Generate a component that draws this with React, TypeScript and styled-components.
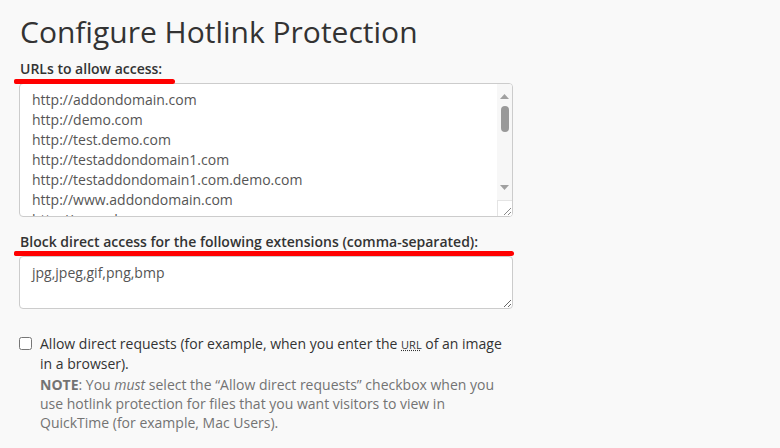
import styled, { createGlobalStyle } from 'styled-components';

const urls = [
  'http://addondomain.com',
  'http://demo.com',
  'http://test.demo.com',
  'http://testaddondomain1.com',
  'http://testaddondomain1.com.demo.com',
  'http://www.addondomain.com',
  'http://www.demo.com',
  'http://www.test.demo.com',
  'http://www.testaddondomain1.com',
];

function App() {
  return (
    <Page>
      <GlobalStyle />
      <Title>Configure Hotlink Protection</Title>

      <Field>
        <Label>
          URLs to allow access:
          <Mark $width={161} $top={20} />
        </Label>
        <ScrollBox>
          <ListArea defaultValue={urls.join('\n')} spellCheck={false} />
          <ScrollColumn>
            <ArrowButton>
              <svg width="9" height="5" viewBox="0 0 9 5">
                <path d="M0 5 L4.5 0 L9 5 Z" fill="#a0a0a0" />
              </svg>
            </ArrowButton>
            <Track>
              <Thumb />
            </Track>
            <ArrowButton $down>
              <svg width="9" height="5" viewBox="0 0 9 5">
                <path d="M0 0 L9 0 L4.5 5 Z" fill="#a0a0a0" />
              </svg>
            </ArrowButton>
            <Corner>
              <svg width="8" height="8" viewBox="0 0 8 8">
                <path d="M1 8 L8 1 M5 8 L8 5" stroke="#8a8a8a" strokeWidth="1" />
              </svg>
            </Corner>
          </ScrollColumn>
        </ScrollBox>
      </Field>

      <Field>
        <Label>
          Block direct access for the following extensions (comma-separated):
          <Mark $width={500} $top={19} />
        </Label>
        <TextArea defaultValue="jpg,jpeg,gif,png,bmp" spellCheck={false} />
      </Field>

      <CheckRow>
        <CheckBox type="checkbox" />
        <div>
          <CheckText>
            Allow direct requests (for example, when you enter the <Abbr title="Uniform Resource Locator">URL</Abbr> of an
            image in a browser).
          </CheckText>
          <Note>
            <strong>NOTE</strong>: You <em>must</em> select the “Allow direct requests” checkbox when you use hotlink
            protection for files that you want visitors to view in QuickTime (for example, Mac Users).
          </Note>
        </div>
      </CheckRow>
    </Page>
  );
}

const GlobalStyle = createGlobalStyle`
  html, body {
    margin: 0;
    background: #f9f9f9;
  }
  body {
    font-family: 'Open Sans', 'Liberation Sans', sans-serif;
    font-size: 14px;
    color: #333;
  }
`;
const Page = styled.div`
  width: 494px;
  padding: 12px 0 0 19px;
`;
const Title = styled.h1`
  font-size: 30px;
  font-weight: 400;
  line-height: 40px;
  margin: 0 0 7px 1px;
  color: #333;
`;
const Field = styled.div`
  margin-bottom: 15px;
`;
const Label = styled.label`
  position: relative;
  display: inline-block;
  font-weight: 600;
  line-height: 20px;
  margin: 0 0 4px 1px;
`;
const Mark = styled.span<{ $width: number; $top: number }>`
  position: absolute;
  left: -6px;
  top: ${({ $top }) => $top}px;
  width: ${({ $width }) => $width}px;
  height: 5px;
  border-radius: 2px 3px 3px 2px;
  background: #f00;
`;
const ScrollBox = styled.div`
  display: flex;
  box-sizing: border-box;
  width: 494px;
  height: 134px;
  border: 1px solid #ccc;
  border-radius: 4px;
  background: #fff;
  overflow: hidden;
`;
const ListArea = styled.textarea`
  flex: 1;
  min-width: 0;
  margin: 0;
  padding: 6px 12px;
  border: none;
  background: transparent;
  font-family: 'Open Sans', 'Liberation Sans', sans-serif;
  font-size: 14px;
  line-height: 20px;
  color: #555;
  resize: none;
  overflow: hidden;
  outline: none;
`;
const ScrollColumn = styled.div`
  display: flex;
  flex-direction: column;
  width: 15px;
  flex: none;
  background: #f7f7f7;
`;
const ArrowButton = styled.div<{ $down?: boolean }>`
  display: flex;
  align-items: center;
  justify-content: center;
  height: 20px;
  margin-bottom: ${({ $down }) => ($down ? '3px' : '0')};
  padding-top: ${({ $down }) => ($down ? '0' : '4px')};
  box-sizing: border-box;
`;
const Track = styled.div`
  flex: 1;
  display: flex;
  justify-content: center;
`;
const Thumb = styled.div`
  width: 8px;
  height: 26px;
  margin-top: 2px;
  border-radius: 4px;
  background: #999;
`;
const Corner = styled.div`
  display: flex;
  align-items: flex-end;
  justify-content: flex-end;
  height: 16px;
  padding: 0 1px 1px 0;
  box-sizing: border-box;
  border-top: 1px solid #e4e4e4;
  border-left: 1px solid #e4e4e4;
  background: #fff;
`;
const TextArea = styled.textarea`
  display: block;
  box-sizing: border-box;
  width: 494px;
  height: 53px;
  margin: 0;
  padding: 6px 12px;
  border: 1px solid #ccc;
  border-radius: 4px;
  background: #fff;
  font-family: 'Open Sans', 'Liberation Sans', sans-serif;
  font-size: 14px;
  line-height: 20px;
  color: #555;
  resize: vertical;
  outline: none;
`;
const CheckRow = styled.div`
  display: flex;
  align-items: flex-start;
  gap: 8px;
  margin-top: 25px;
`;
const CheckBox = styled.input`
  width: 13px;
  height: 13px;
  margin: 3px 0 0 0;
  flex: none;
`;
const CheckText = styled.div`
  line-height: 19px;
`;
const Abbr = styled.abbr`
  font-size: 11px;
  text-decoration: underline dotted;
  cursor: help;
`;
const Note = styled.p`
  margin: 2px 0 0;
  line-height: 19px;
  color: #737373;

  strong {
    font-weight: 700;
  }
`;

export default App;
